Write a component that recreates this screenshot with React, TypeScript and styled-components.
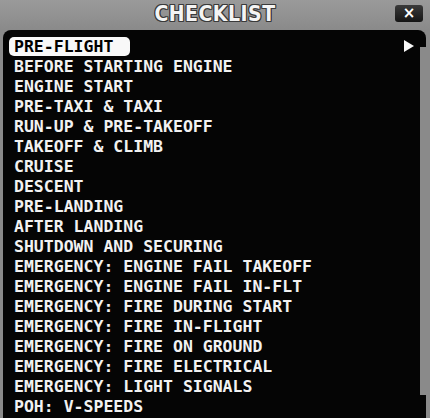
import styled, { createGlobalStyle } from 'styled-components';

const items = [
	'PRE-FLIGHT',
	'BEFORE STARTING ENGINE',
	'ENGINE START',
	'PRE-TAXI & TAXI',
	'RUN-UP & PRE-TAKEOFF',
	'TAKEOFF & CLIMB',
	'CRUISE',
	'DESCENT',
	'PRE-LANDING',
	'AFTER LANDING',
	'SHUTDOWN AND SECURING',
	'EMERGENCY: ENGINE FAIL TAKEOFF',
	'EMERGENCY: ENGINE FAIL IN-FLT',
	'EMERGENCY: FIRE DURING START',
	'EMERGENCY: FIRE IN-FLIGHT',
	'EMERGENCY: FIRE ON GROUND',
	'EMERGENCY: FIRE ELECTRICAL',
	'EMERGENCY: LIGHT SIGNALS',
	'POH: V-SPEEDS',
];

function App() {
	return (
		<>
			<GlobalStyle />
			<Window>
				<TitleBar>
					<Title>CHECKLIST</Title>
					<CloseButton>×</CloseButton>
				</TitleBar>
				<Panel>
					<List>
						{items.map((item, i) => (
							<Row key={item}>
								<Label selected={i === 0}>{item}</Label>
								{i === 0 && <Arrow />}
							</Row>
						))}
					</List>
					<ScrollTrack>
						<Thumb />
					</ScrollTrack>
				</Panel>
			</Window>
		</>
	);
}

export default App;

const GlobalStyle = createGlobalStyle`
	html, body {
		margin: 0;
		padding: 0;
		background: #8c8c8c;
	}
`

const Window = styled.div`
	display: flex;
	flex-direction: column;
	width: 430px;
	height: 418px;
	overflow: hidden;
	background: linear-gradient(#9a9a9a, #8a8a8a 30px, #8a8a8a);
`

const TitleBar = styled.div`
	position: relative;
	display: flex;
	justify-content: center;
	align-items: center;
	height: 30px;
`

const Title = styled.div`
	font-family: "DejaVu Sans Condensed", "DejaVu Sans", sans-serif;
	font-weight: 700;
	font-size: 21px;
	letter-spacing: 0.5px;
	color: #f4f4f4;
	margin-top: -3px;
	text-shadow:
		-1px -1px 0 #3a3a3a, 1px -1px 0 #3a3a3a,
		-1px 1px 0 #3a3a3a, 1px 1px 0 #3a3a3a,
		0 -1px 0 #3a3a3a, 0 1px 0 #3a3a3a,
		-1px 0 0 #3a3a3a, 1px 0 0 #3a3a3a;
`

const CloseButton = styled.div`
	position: absolute;
	right: 7px;
	top: 5px;
	width: 28px;
	height: 17px;
	display: flex;
	align-items: center;
	justify-content: center;
	border-radius: 3px;
	background: linear-gradient(#3a3a3a, #151515);
	color: #fff;
	font-family: "DejaVu Sans", sans-serif;
	font-weight: 700;
	font-size: 15px;
	line-height: 1;
`

const Panel = styled.div`
	display: flex;
	flex: 1;
	margin: 0 4px 0 3px;
	background: #050505;
	border-radius: 8px 8px 0 0;
`

const List = styled.div`
	display: flex;
	flex-direction: column;
	flex: 1;
	padding: 6px 8px 0 6px;
`

const Row = styled.div`
	display: flex;
	align-items: center;
	justify-content: space-between;
	height: 20px;
`

const Label = styled.span<{ selected: boolean }>`
	font-family: "DejaVu Sans Mono", monospace;
	font-weight: 700;
	font-size: 16.5px;
	line-height: 19px;
	padding: 0 ${props => props.selected ? '17px' : '5px'} 0 5px;
	border-radius: 5px;
	background: ${props => props.selected ? '#f8f8f8' : 'transparent'};
	color: ${props => props.selected ? '#000' : '#f2f2f2'};
`

const Arrow = styled.span`
	width: 0;
	height: 0;
	margin-right: -2px;
	border-top: 6px solid transparent;
	border-bottom: 6px solid transparent;
	border-left: 10px solid #f8f8f8;
`

const ScrollTrack = styled.div`
	display: flex;
	flex-direction: column;
	width: 10px;
	padding-top: 17px;
	margin-right: -4px;
`

const Thumb = styled.div`
	height: 348px;
	background: #8a8a8a;
`
